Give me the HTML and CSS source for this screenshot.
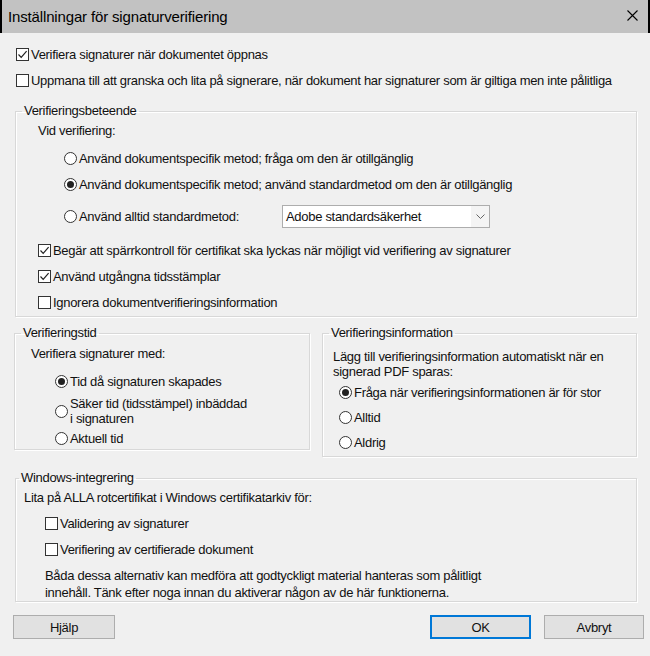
FILE: index.html
```html
<!DOCTYPE html>
<html lang="sv">
<head>
  <meta charset="UTF-8">
  <title>Inställningar för signaturverifiering</title>
  <link rel="stylesheet" href="styles.css">
</head>
<body>
  <div class="dialog">
    <div class="titlebar">
      <span class="title">Inställningar för signaturverifiering</span>
      <svg class="close" width="11" height="11" viewBox="0 0 11 11"><path d="M0.5 0.5 L10.5 10.5 M10.5 0.5 L0.5 10.5" stroke="#000" stroke-width="1.1" fill="none"/></svg>
    </div>

    <div class="content">
      <label class="check row-top">
        <span class="box checked"><svg width="11" height="11" viewBox="0 0 11 11"><path d="M1.5 5.5 L4.2 8.3 L9.6 2.2" stroke="#222" stroke-width="1.2" fill="none"/></svg></span>
        <span>Verifiera signaturer när dokumentet öppnas</span>
      </label>
      <label class="check row-top">
        <span class="box"></span>
        <span>Uppmana till att granska och lita på signerare, när dokument har signaturer som är giltiga men inte pålitliga</span>
      </label>

      <fieldset class="group behaviour">
        <legend>Verifieringsbeteende</legend>
        <div class="caption">Vid verifiering:</div>
        <div class="radios">
          <label class="radio"><span class="circle"></span><span>Använd dokumentspecifik metod; fråga om den är otillgänglig</span></label>
          <label class="radio"><span class="circle on"></span><span>Använd dokumentspecifik metod; använd standardmetod om den är otillgänglig</span></label>
          <div class="radio with-select">
            <span class="radio-label"><span class="circle"></span><span>Använd alltid standardmetod:</span></span>
            <div class="select">
              <span>Adobe standardsäkerhet</span>
              <span class="arrow"><svg width="9" height="5" viewBox="0 0 9 5"><path d="M0.5 0.5 L4.5 4.5 L8.5 0.5" stroke="#666" stroke-width="1" fill="none"/></svg></span>
            </div>
          </div>
        </div>
        <div class="checks">
          <label class="check">
            <span class="box checked"><svg width="11" height="11" viewBox="0 0 11 11"><path d="M1.5 5.5 L4.2 8.3 L9.6 2.2" stroke="#222" stroke-width="1.2" fill="none"/></svg></span>
            <span>Begär att spärrkontroll för certifikat ska lyckas när möjligt vid verifiering av signaturer</span>
          </label>
          <label class="check">
            <span class="box checked"><svg width="11" height="11" viewBox="0 0 11 11"><path d="M1.5 5.5 L4.2 8.3 L9.6 2.2" stroke="#222" stroke-width="1.2" fill="none"/></svg></span>
            <span>Använd utgångna tidsstämplar</span>
          </label>
          <label class="check">
            <span class="box"></span>
            <span>Ignorera dokumentverifieringsinformation</span>
          </label>
        </div>
      </fieldset>

      <div class="pair">
        <fieldset class="group time">
          <legend>Verifieringstid</legend>
          <div class="caption">Verifiera signaturer med:</div>
          <div class="radios">
            <label class="radio"><span class="circle on"></span><span>Tid då signaturen skapades</span></label>
            <label class="radio two-line"><span class="circle"></span><span>Säker tid (tidsstämpel) inbäddad<br>i signaturen</span></label>
            <label class="radio last"><span class="circle"></span><span>Aktuell tid</span></label>
          </div>
        </fieldset>

        <fieldset class="group info">
          <legend>Verifieringsinformation</legend>
          <div class="caption">Lägg till verifieringsinformation automatiskt när en<br>signerad PDF sparas:</div>
          <div class="radios">
            <label class="radio"><span class="circle on"></span><span>Fråga när verifieringsinformationen är för stor</span></label>
            <label class="radio"><span class="circle"></span><span>Alltid</span></label>
            <label class="radio"><span class="circle"></span><span>Aldrig</span></label>
          </div>
        </fieldset>
      </div>

      <fieldset class="group windows">
        <legend>Windows-integrering</legend>
        <div class="caption">Lita på ALLA rotcertifikat i Windows certifikatarkiv för:</div>
        <div class="checks">
          <label class="check"><span class="box"></span><span>Validering av signaturer</span></label>
          <label class="check"><span class="box"></span><span>Verifiering av certifierade dokument</span></label>
        </div>
        <p class="warning">Båda dessa alternativ kan medföra att godtyckligt material hanteras som pålitligt<br>innehåll. Tänk efter noga innan du aktiverar någon av de här funktionerna.</p>
      </fieldset>

      <div class="buttons">
        <button class="btn help">Hjälp</button>
        <button class="btn ok">OK</button>
        <button class="btn cancel">Avbryt</button>
      </div>
    </div>
  </div>
</body>
</html>
```

FILE: styles.css
```css
body {
  margin: 0;
  background-color: #f0f0f0;
  font-family: "Liberation Sans", Arial, sans-serif;
  font-size: 13px;
  letter-spacing: -0.3px;
  color: #111;
}

.dialog {
  width: 650px;
  height: 656px;
  overflow: hidden;
}

.titlebar {
  height: 33px;
  background-color: #c2c2c2;
  border-left: 2px solid #000;
  border-right: 2px solid #000;
  display: flex;
  align-items: center;
  justify-content: space-between;
  padding: 0 10px 0 6px;
  box-sizing: border-box;
}

.title {
  font-size: 15px;
  letter-spacing: -0.15px;
  color: #000;
}

.close {
  margin-top: -2px;
}

.content {
  padding: 8px 13px 0 15px;
}

/* checkboxes and radio buttons */
.check,
.radio {
  display: flex;
  align-items: center;
  height: 26px;
  gap: 2px;
  white-space: nowrap;
}

.row-top {
  padding-left: 1px;
}

.box {
  width: 11px;
  height: 11px;
  border: 1px solid #333;
  background-color: #fff;
  display: flex;
  align-items: center;
  justify-content: center;
  flex-shrink: 0;
}

.circle {
  width: 11px;
  height: 11px;
  border: 1px solid #333;
  border-radius: 50%;
  background-color: #fff;
  display: flex;
  align-items: center;
  justify-content: center;
  flex-shrink: 0;
}

.circle.on::after {
  content: "";
  width: 7px;
  height: 7px;
  border-radius: 50%;
  background-color: #222;
}

/* group boxes */
.group {
  margin: 0;
  padding: 0;
  border: 1px solid #d8d8d8;
  box-shadow: inset 1px 1px 0 #fff, 1px 1px 0 #fff;
  min-width: 0;
}

.group legend {
  margin-left: 6px;
  padding: 0 2px;
  line-height: 16px;
}

.caption {
  line-height: 15px;
  white-space: nowrap;
}

/* Verifieringsbeteende */
.behaviour {
  margin-top: 10px;
}

.behaviour .caption {
  padding: 4px 0 3px 22px;
}

.behaviour .radios {
  padding: 4px 0 0 48px;
}

.with-select {
  height: 26px;
  margin-top: 6px;
}

.radio-label {
  display: flex;
  align-items: center;
  gap: 2px;
  width: 216px;
}

.select {
  width: 203px;
  height: 21px;
  border: 1px solid #adadad;
  background-color: #fff;
  display: flex;
  align-items: center;
  justify-content: space-between;
  padding-left: 3px;
}

.arrow {
  width: 18px;
  height: 21px;
  background-color: #f4f4f4;
  display: flex;
  align-items: center;
  justify-content: center;
}

.behaviour .checks {
  padding: 8px 0 1px 22px;
}

/* Verifieringstid / Verifieringsinformation */
.pair {
  display: flex;
  align-items: flex-start;
  gap: 12px;
  margin-top: 8px;
}

.time {
  width: 294px;
  margin-left: -1px;
}

.time .caption {
  padding: 5px 0 4px 16px;
}

.time .radios {
  padding: 3px 0 0 40px;
}

.time .two-line {
  height: 34px;
  line-height: 15px;
}

.time .last {
  height: 21px;
}

.info {
  flex: 1;
}

.info .caption {
  padding: 8px 0 1px 10px;
}

.info .radios {
  padding: 0 0 1px 16px;
}

.info .radio {
  height: 25px;
}

/* Windows-integrering */
.windows {
  margin-top: 13px;
}

.windows legend {
  margin-left: 3px;
}

.windows .caption {
  padding: 4px 0 5px 8px;
}

.windows .checks {
  padding-left: 29px;
}

.warning {
  margin: 5px 0 0 29px;
  line-height: 17px;
  white-space: nowrap;
}

/* buttons */
.buttons {
  display: flex;
  gap: 13px;
  margin: 13px -7px 0 -2px;
}

.btn {
  height: 24px;
  border: 1px solid #adadad;
  background-color: #e1e1e1;
  font-family: inherit;
  font-size: 13px;
  letter-spacing: -0.3px;
  color: #111;
  padding: 0;
}

.help {
  width: 102px;
}

.ok {
  width: 101px;
  margin-left: auto;
  border: 2px solid #0078d7;
}

.cancel {
  width: 100px;
}
```
